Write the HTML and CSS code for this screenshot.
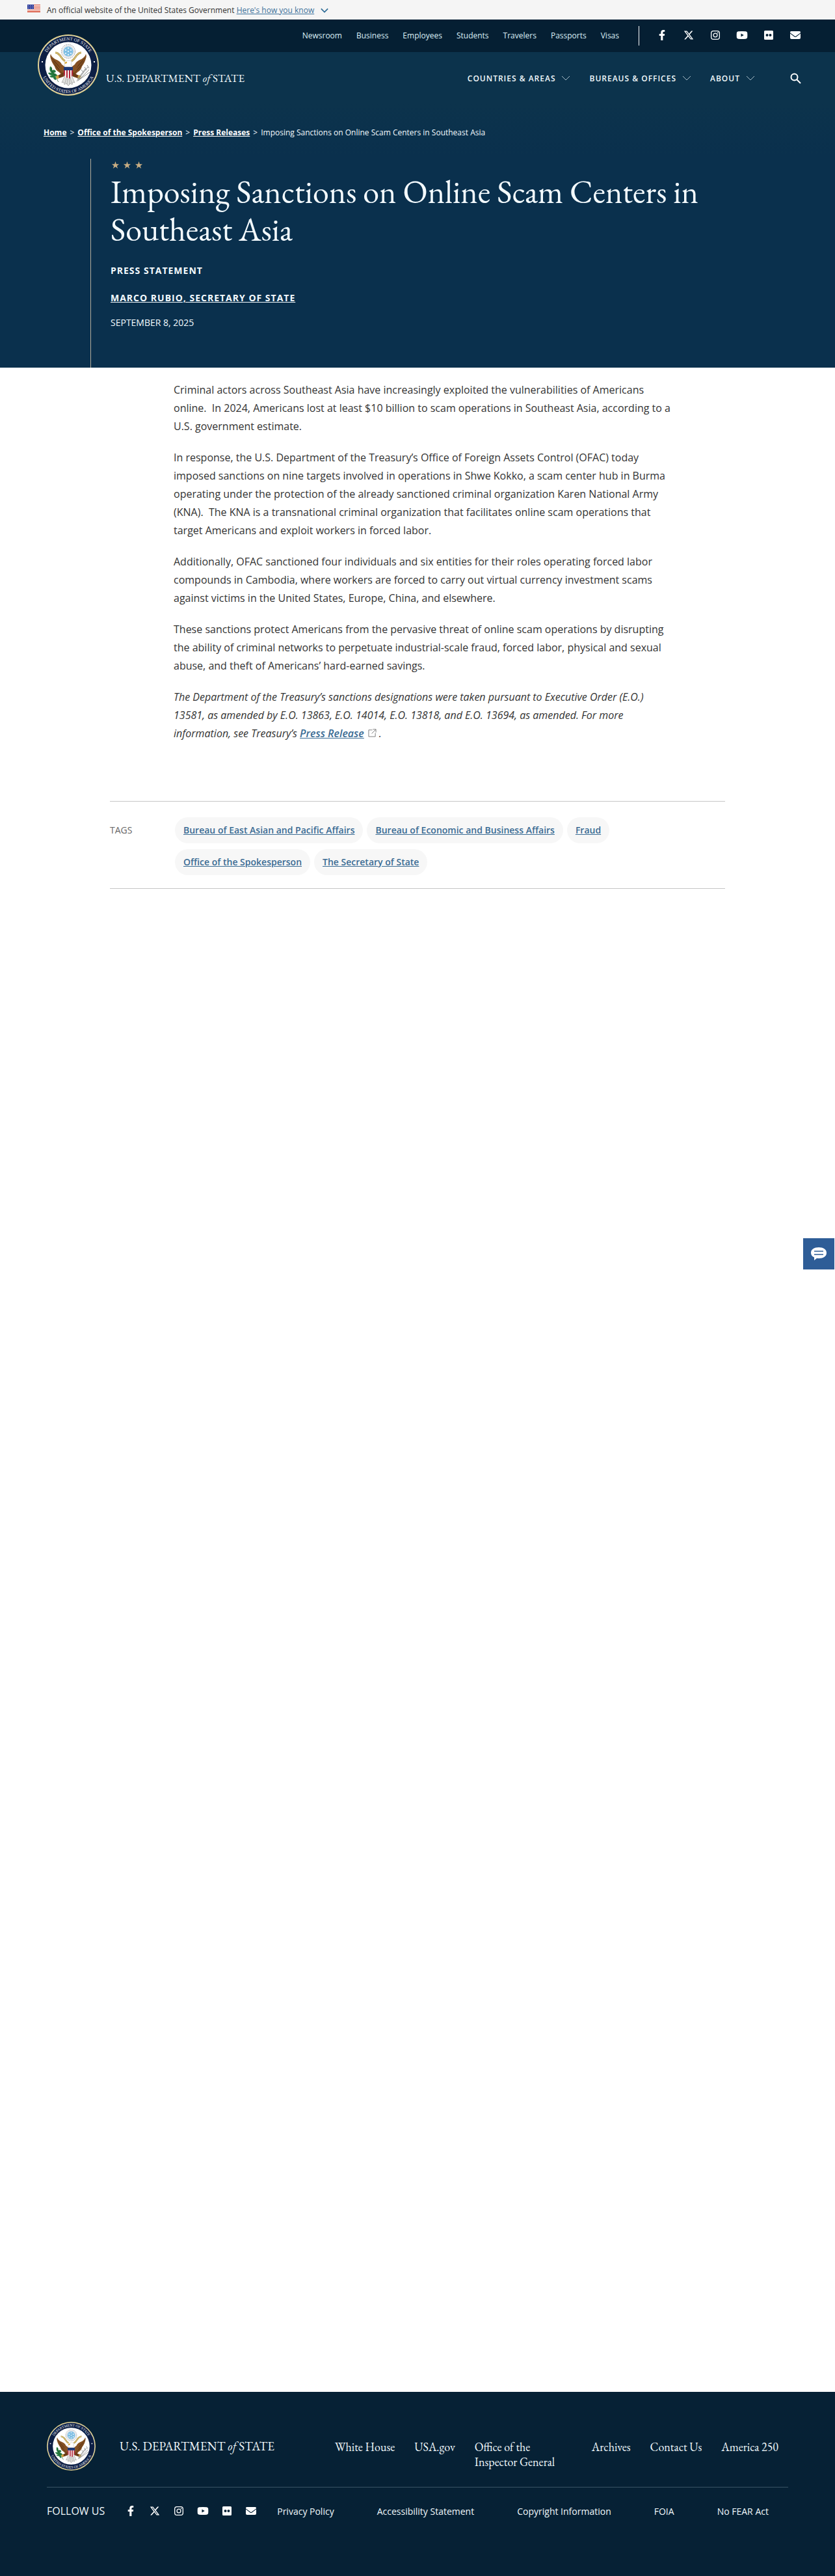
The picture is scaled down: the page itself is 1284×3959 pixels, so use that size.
FILE: index.html
```html
<!DOCTYPE html>
<html lang="en">
<head>
  <meta charset="UTF-8">
  <meta name="viewport" content="width=device-width, initial-scale=1">
  <title>Imposing Sanctions on Online Scam Centers in Southeast Asia</title>
  <link rel="stylesheet" href="styles.css">
</head>
<body>
  <!-- shared icons -->
  <svg class="sprite" aria-hidden="true">
    <symbol id="facebook" viewBox="0 0 320 512"><path d="M279 288l14-93h-89v-60c0-25 12-50 52-50h41V7s-37-7-72-7c-73 0-121 44-121 125v70H23v93h81v224h100V288z"/></symbol>
    <symbol id="x" viewBox="0 0 512 512"><path d="M389 48h71L306 224l181 240H345L234 319 107 464H36l165-188L27 48h145l101 133zm-25 374h39L151 88h-42z"/></symbol>
    <symbol id="instagram" viewBox="0 0 512 512"><path fill-rule="evenodd" d="M160 32h192a128 128 0 0 1 128 128v192a128 128 0 0 1-128 128H160A128 128 0 0 1 32 352V160A128 128 0 0 1 160 32zm4 41a90 90 0 0 0-90 90v186a90 90 0 0 0 90 90h184a90 90 0 0 0 90-90V163a90 90 0 0 0-90-90zm92 69a114 114 0 1 1 0 228 114 114 0 0 1 0-228zm0 40a74 74 0 1 0 0 148 74 74 0 0 0 0-148z"/><circle cx="375" cy="137" r="27"/></symbol>
    <symbol id="youtube" viewBox="0 0 576 512"><path fill-rule="evenodd" d="M100 72q188-16 376 0 66 5 74 70 10 114 0 228-8 65-74 70-188 16-376 0-66-5-74-70-10-114 0-228 8-65 74-70zm138 106v156l138-78z"/></symbol>
    <symbol id="flickr" viewBox="0 0 448 512"><path fill-rule="evenodd" d="M48 32h352q48 0 48 48v352q0 48-48 48H48q-48 0-48-48V80q0-48 48-48zm97 160a64 64 0 1 0 0 128 64 64 0 0 0 0-128zm158 0a64 64 0 1 0 0 128 64 64 0 0 0 0-128z"/></symbol>
    <symbol id="mail" viewBox="0 0 512 512"><path d="M48 64h416q48 0 48 48 0 24-20 38L275 314q-19 14-38 0L20 150Q0 136 0 112q0-48 48-48zM0 176l218 164q38 28 76 0l218-164v208q0 64-64 64H64q-64 0-64-64z"/></symbol>
    <symbol id="star" viewBox="0 0 24 24"><path d="M12 0l3 9h9l-7 6 3 9-8-6-8 6 3-9-7-6h9z"/></symbol>
    <symbol id="chevron" viewBox="0 0 14 8"><path d="M1 1l6 6 6-6" fill="none" stroke="currentColor"/></symbol>
  </svg>

  <div class="gov-banner">
    <svg class="flag" viewBox="0 0 20 12" aria-hidden="true">
      <path fill="#fff" d="M0 0h20v12H0z"/>
      <path fill="#db5f4a" d="M0 0h20v1H0zm0 2h20v1H0zm0 2h20v1H0zm0 2h20v1H0zm0 2h20v1H0zm0 2h20v1H0zm0 1h20v1H0z"/>
      <path fill="#2f3f9b" d="M0 0h10v7H0z"/>
      <path fill="#b9c0e4" d="M1 1h1v1H1zm3 0h1v1H4zm3 0h1v1H7zM2 3h1v1H2zm3 0h1v1H5zm3 0h1v1H8zM1 5h1v1H1zm3 0h1v1H4zm3 0h1v1H7z"/>
    </svg>
    <p>An official website of the United States Government <a href="#">Here's how you know</a></p>
    <svg class="banner-chevron" aria-hidden="true"><use href="#chevron"/></svg>
  </div>

  <header class="site-header">
    <div class="top-bar">
      <nav class="top-nav" aria-label="Audience">
        <a href="#">Newsroom</a>
        <a href="#">Business</a>
        <a href="#">Employees</a>
        <a href="#">Students</a>
        <a href="#">Travelers</a>
        <a href="#">Passports</a>
        <a href="#">Visas</a>
      </nav>
      <div class="social top-social">
        <a href="#" aria-label="Facebook"><svg><use href="#facebook"/></svg></a>
        <a href="#" aria-label="X"><svg><use href="#x"/></svg></a>
        <a href="#" aria-label="Instagram"><svg><use href="#instagram"/></svg></a>
        <a href="#" aria-label="YouTube"><svg><use href="#youtube"/></svg></a>
        <a href="#" aria-label="Flickr"><svg><use href="#flickr"/></svg></a>
        <a href="#" aria-label="Email"><svg><use href="#mail"/></svg></a>
      </div>
    </div>
    <div class="main-bar">
      <a class="brand" href="#">
        <svg class="seal" viewBox="0 0 94 94" aria-hidden="true">
          <defs>
            <path id="arc-top" d="M9 47a38 38 0 0 1 76 0"/>
            <path id="arc-bottom" d="M4 47a43 43 0 0 0 86 0"/>
          </defs>
          <g id="seal">
            <circle cx="47" cy="47" r="47" fill="#dccb86"/>
            <circle cx="47" cy="47" r="45.500" fill="#f7f2d8"/>
            <circle cx="47" cy="47" r="45" fill="#0d1f45"/>
            <circle cx="47" cy="47" r="35.500" fill="#fff"/>
            <g fill="#e8ebf0" font-family="Liberation Serif, serif" font-size="7" text-anchor="middle">
              <text><textPath href="#arc-top" startOffset="50%">DEPARTMENT OF STATE</textPath></text>
              <text><textPath href="#arc-bottom" startOffset="50%">UNITED STATES OF AMERICA</textPath></text>
            </g>
            <path d="M6 41h2v2H6zm80 0h2v2h-2z" fill="#fff"/>
            <!-- glory -->
            <circle cx="47" cy="26" r="10.500" fill="#fff" stroke="#8d9298" stroke-width="1" stroke-dasharray="2 1"/>
            <circle cx="47" cy="26" r="8.500" fill="none" stroke="#c9cdd2" stroke-width="1"/>
            <circle cx="47" cy="26" r="7.500" fill="#7fbfe4"/>
            <g fill="#fff"><circle cx="47" cy="21" r="1"/><circle cx="43" cy="24" r="1"/><circle cx="51" cy="24" r="1"/><circle cx="47" cy="26" r="1"/><circle cx="43" cy="29" r="1"/><circle cx="51" cy="29" r="1"/><circle cx="47" cy="31" r="1"/></g>
            <!-- tail -->
            <path d="M42 63l-5 11 3-1 1 4 3-2 3 4 3-4 3 2 1-4 3 1-5-11z" fill="#e4e4e2" stroke="#8c8c89" stroke-width=".6"/>
            <path d="M44 66l-2 9m4-9l-1 11m3-11l1 11m1-11l2 9" stroke="#8c8c89" stroke-width=".6"/>
            <!-- wings -->
            <path d="M20 30c1 4 4 6 7 8 5 2 8 4 10 8l5 4v14c-4-1-7-3-9-6-4-2-6-5-7-9-3-4-5-8-6-12-1-3-1-5 0-7z" fill="#855123"/>
            <path d="M74 30c-1 4-4 6-7 8-5 2-8 4-10 8l-5 4v14c4-1 7-3 9-6 4-2 6-5 7-9 3-4 5-8 6-12 1-3 1-5 0-7z" fill="#855123"/>
            <path d="M21 36l11 12m-9-7l10 13m-7-7l12 13M25 40l9 11m39-15L62 48m9-7L61 54m7-7L56 60m13-20l-9 11" stroke="#4f2d12" stroke-width=".7" fill="none"/>
            <!-- ribbon -->
            <path d="M27 28c4 0 5 2 7 4s3 6 8 9m25-13c-4 0-5 2-7 4s-3 6-8 9" fill="none" stroke="#b5994a" stroke-width="3"/>
            <path d="M27 28c4 0 5 2 7 4s3 6 8 9m25-13c-4 0-5 2-7 4s-3 6-8 9" fill="none" stroke="#f0dd97" stroke-width="1"/>
            <!-- head -->
            <path d="M41 49c0-6 2-9 7-9 4 0 5 3 3 5l2 5z" fill="#fff" stroke="#aaa" stroke-width=".5"/>
            <path d="M45 42l-4 1 1 2 3-1z" fill="#dda62d"/>
            <!-- legs -->
            <path d="M40 58l-7 4-4 2 1 4 9-3 4-2m11-5l7 4 4 2-1 4-9-3-4-2" fill="#6b3c19"/>
            <path d="M27 64l4-2 2 4-3 3zm40 0l-4-2-2 4 3 3z" fill="#d1a43e"/>
            <!-- shield -->
            <path d="M40 50h14v12q-2 4-7 6-5-2-7-6z" fill="#f5eeee"/>
            <path d="M40 55h2v9l-2-2zm4 0h2v12l-2-1zm4 0h2v12l-2 1zm4 0h2v7l-2 3z" fill="#b3263a"/>
            <path d="M40 50h14v5H40z" fill="#1c3775"/>
            <!-- olive branch -->
            <path d="M19 49q4 1 3 6 5-2 6 2-1 2-4 2 5 1 6 4-2 2-4 1 3 3 2 6-4-1-4-4-4 1-6-2l4-1q-5-1-6-4 2-1 5 0-4-4-2-10z" fill="#247a3e"/>
            <path d="M20 51q3 8 12 22" fill="none" stroke="#15502a" stroke-width=".7"/>
            <!-- arrows -->
            <path d="M60 72l17-22m-15 21l17-17m-16 16l17-12m-19 11l12-16m-6 1l3 4m2-8l3 5m1-8l3 5" fill="none" stroke="#8b8d8e" stroke-width="1"/>
          </g>
        </svg>
        <span>U.S. DEPARTMENT <i>of</i> STATE</span>
      </a>
      <nav class="main-nav" aria-label="Main">
        <button type="button">Countries &amp; Areas <svg><use href="#chevron"/></svg></button>
        <button type="button">Bureaus &amp; Offices <svg><use href="#chevron"/></svg></button>
        <button type="button">About <svg><use href="#chevron"/></svg></button>
      </nav>
      <button class="search" type="button" aria-label="Search">
        <svg viewBox="0 0 17 17"><circle cx="6.500" cy="6.500" r="5"/><path d="M10 10l6 6"/></svg>
      </button>
    </div>
  </header>

  <section class="hero">
    <nav class="breadcrumb" aria-label="Breadcrumb">
      <a href="#">Home</a><span>&gt;</span><a href="#">Office of the Spokesperson</a><span>&gt;</span><a href="#">Press Releases</a><span>&gt;</span>Imposing Sanctions on Online Scam Centers in Southeast Asia
    </nav>
    <div class="hero-inner">
      <div class="stars" aria-hidden="true">
        <svg><use href="#star"/></svg><svg><use href="#star"/></svg><svg><use href="#star"/></svg>
      </div>
      <h1>Imposing Sanctions on Online Scam Centers in Southeast Asia</h1>
      <p class="doc-type">Press Statement</p>
      <p class="author"><a href="#">Marco Rubio, Secretary of State</a></p>
      <p class="date">September 8, 2025</p>
    </div>
  </section>

  <main>
    <article class="entry">
      <p>Criminal actors across Southeast Asia have increasingly exploited the vulnerabilities of Americans online.&nbsp; In 2024, Americans lost at least $10 billion to scam operations in Southeast Asia, according to a U.S. government estimate.</p>
      <p>In response, the U.S. Department of the Treasury’s Office of Foreign Assets Control (OFAC) today imposed sanctions on nine targets involved in operations in Shwe Kokko, a scam center hub in Burma operating under the protection of the already sanctioned criminal organization Karen National Army (KNA).&nbsp; The KNA is a transnational criminal organization that facilitates online scam operations that target Americans and exploit workers in forced labor.</p>
      <p>Additionally, OFAC sanctioned four individuals and six entities for their roles operating forced labor compounds in Cambodia, where workers are forced to carry out virtual currency investment scams against victims in the United States, Europe, China, and elsewhere.</p>
      <p>These sanctions protect Americans from the pervasive threat of online scam operations by disrupting the ability of criminal networks to perpetuate industrial-scale fraud, forced labor, physical and sexual abuse, and theft of Americans’ hard-earned savings.</p>
      <p><em>The Department of the Treasury’s sanctions designations were taken pursuant to Executive Order (E.O.) 13581, as amended by E.O. 13863, E.O. 14014, E.O. 13818, and E.O. 13694, as amended. For more information, see Treasury’s <a href="#">Press Release</a><svg class="external" viewBox="0 0 14 14" aria-hidden="true"><path d="M7 2H1v11h11V7M8 1h5v5M13 1L6 8"/></svg>.</em></p>
    </article>

    <section class="tags">
      <h2>Tags</h2>
      <ul>
        <li><a href="#">Bureau of East Asian and Pacific Affairs</a></li>
        <li><a href="#">Bureau of Economic and Business Affairs</a></li>
        <li><a href="#">Fraud</a></li>
        <li><a href="#">Office of the Spokesperson</a></li>
        <li><a href="#">The Secretary of State</a></li>
      </ul>
    </section>
  </main>

  <button class="feedback" type="button" aria-label="Feedback">
    <svg viewBox="0 0 24 20"><path fill="#fff" d="M12 0c7 0 12 3 12 8.500S19 17 12 17l-3-.3-4 3.300v-4.700C2 14 0 12 0 8.500 0 3 5 0 12 0z"/><path stroke="#2e5d97" stroke-width="1.500" d="M5 6h14M5 11h14"/></svg>
  </button>

  <footer class="site-footer">
    <div class="footer-inner">
      <div class="footer-top">
        <a class="footer-brand" href="#">
          <svg class="seal" viewBox="0 0 94 94" aria-hidden="true"><use href="#seal"/></svg>
          <span>U.S. DEPARTMENT <i>of</i> STATE</span>
        </a>
        <nav class="footer-nav" aria-label="Footer">
          <a href="#">White House</a>
          <a href="#">USA.gov</a>
          <a class="wrap" href="#">Office of the Inspector General</a>
          <a href="#">Archives</a>
          <a href="#">Contact Us</a>
          <a href="#">America 250</a>
        </nav>
      </div>
      <div class="footer-bottom">
        <span class="follow">FOLLOW US</span>
        <div class="social footer-social">
          <a href="#" aria-label="Facebook"><svg><use href="#facebook"/></svg></a>
          <a href="#" aria-label="X"><svg><use href="#x"/></svg></a>
          <a href="#" aria-label="Instagram"><svg><use href="#instagram"/></svg></a>
          <a href="#" aria-label="YouTube"><svg><use href="#youtube"/></svg></a>
          <a href="#" aria-label="Flickr"><svg><use href="#flickr"/></svg></a>
          <a href="#" aria-label="Email"><svg><use href="#mail"/></svg></a>
        </div>
        <nav class="legal" aria-label="Legal">
          <a href="#">Privacy Policy</a>
          <a href="#">Accessibility Statement</a>
          <a href="#">Copyright Information</a>
          <a href="#">FOIA</a>
          <a href="#">No FEAR Act</a>
        </nav>
      </div>
    </div>
  </footer>
</body>
</html>
```
FILE: styles.css
```css
* {
  box-sizing: border-box;
}
body {
  margin: 0;
  min-height: 100vh;
  display: flex;
  flex-direction: column;
  font-family: "Open Sans", Arial, sans-serif;
  color: #333;
  background: #fff;
}
p, h1, h2, ul {
  margin: 0;
  padding: 0;
}
button {
  font: inherit;
  color: inherit;
  background: none;
  border: 0;
  padding: 0;
  cursor: pointer;
}
.sprite {
  position: absolute;
  width: 0;
  height: 0;
}

/* gov banner */
.gov-banner {
  display: flex;
  align-items: center;
  height: 30px;
  padding: 0 42px;
  background: #f5f5f5;
  font-size: 12px;
}
.gov-banner a {
  color: #3e729b;
}
.flag {
  width: 20px;
  height: 12px;
  margin: 0 10px 4px 0;
}
.banner-chevron {
  width: 12px;
  height: 8px;
  margin: 2px 0 0 10px;
  color: #2e6c96;
  stroke-width: 2;
}

/* header */
.top-bar {
  display: flex;
  justify-content: flex-end;
  align-items: center;
  height: 50px;
  padding: 0 52px;
  background: #051f33;
  color: #dcf0f7;
  font-size: 12px;
}
.top-bar a {
  padding-bottom: 2px;
  color: inherit;
  text-decoration: none;
}
.top-nav {
  display: flex;
  gap: 22px;
}
.social {
  display: flex;
  align-items: center;
  fill: #fff;
}
.social a {
  display: flex;
}
.social svg {
  width: 18px;
  height: 16px;
}
.top-social {
  gap: 23px;
  height: 30px;
  margin-left: 30px;
  padding-left: 26px;
  border-left: 1px solid #fff;
}
.main-bar {
  display: flex;
  align-items: center;
  height: 80px;
  padding: 0 52px 0 58px;
  background: #0c334c;
  color: #f2f9fb;
}
.brand {
  position: relative;
  padding-left: 105px;
  margin-right: auto;
  color: inherit;
  text-decoration: none;
  font-family: "EB Garamond", "Liberation Serif", serif;
  font-size: 17px;
}
.brand .seal {
  position: absolute;
  left: 0;
  bottom: -16px;
  width: 94px;
  height: 94px;
}
.main-nav {
  display: flex;
  gap: 29px;
}
.main-nav button {
  display: flex;
  align-items: center;
  gap: 9px;
  font-size: 12px;
  font-weight: 600;
  letter-spacing: 1px;
  text-transform: uppercase;
}
.main-nav svg {
  width: 14px;
  height: 8px;
  color: #a8bcc8;
}
.search {
  margin-left: 54px;
}
.search svg {
  display: block;
  width: 17px;
  height: 17px;
  fill: none;
  stroke: #fff;
  stroke-width: 2;
}

/* hero */
.hero {
  background: linear-gradient(#0c334c, #0a304d 80px);
  color: #f4fbff;
}
.breadcrumb {
  padding: 34px 67px 0;
  font-size: 12px;
  line-height: 20px;
}
.breadcrumb a {
  color: #fff;
  font-weight: 700;
}
.breadcrumb span {
  margin: 0 5px;
}
.hero-inner {
  max-width: 1006px;
  margin: 30px auto 0;
  padding: 4px 30px 59px;
  border-left: 1px solid #b3ad9b;
}
.stars {
  display: flex;
  gap: 7px;
  padding-left: 2px;
  fill: #c8ad83;
}
.stars svg {
  width: 11px;
  height: 11px;
}
h1 {
  margin-top: 7px;
  font-family: "EB Garamond", "Liberation Serif", serif;
  font-size: 50px;
  font-weight: 400;
  line-height: 58px;
}
.doc-type, .author {
  font-size: 14px;
  font-weight: 700;
  letter-spacing: 1px;
  line-height: 20px;
  text-transform: uppercase;
}
.doc-type {
  margin-top: 24px;
}
.author {
  margin-top: 22px;
}
.author a {
  color: inherit;
}
.date {
  margin-top: 18px;
  font-size: 14px;
  line-height: 20px;
  text-transform: uppercase;
}

/* article */
main {
  flex: 1;
}
.entry {
  max-width: 790px;
  margin: 0 auto;
  padding: 20px 0 0 20px;
  font-size: 16px;
  line-height: 28px;
}
.entry p {
  margin-bottom: 20px;
}
.entry a {
  color: #3b6c94;
  font-weight: 600;
}
.external {
  width: 13px;
  height: 13px;
  margin: 0 4px 0 6px;
  fill: none;
  stroke: #777;
}
.tags {
  display: flex;
  max-width: 946px;
  margin: 90px auto 0;
  padding: 24px 0 20px;
  border-top: 1px solid #c6c6c6;
  border-bottom: 1px solid #c6c6c6;
}
.tags h2 {
  width: 100px;
  flex: none;
  font-size: 14px;
  font-weight: 400;
  line-height: 40px;
  color: #666;
  text-transform: uppercase;
}
.tags ul {
  display: flex;
  flex-wrap: wrap;
  gap: 9px 6px;
  list-style: none;
}
.tags a {
  display: block;
  padding: 0 13px;
  border-radius: 20px;
  background: #f7f7f7;
  color: #3b6c94;
  font-size: 14px;
  font-weight: 600;
  line-height: 40px;
}
.feedback {
  position: fixed;
  right: 1px;
  top: calc(50% - 77px);
  display: flex;
  align-items: center;
  justify-content: center;
  width: 48px;
  height: 48px;
  background: #2e5d97;
}
.feedback svg {
  width: 24px;
  height: 20px;
}

/* footer */
.site-footer {
  padding: 46px 30px 89px;
  background: #062135;
}
.site-footer a {
  color: #f0f8fb;
  text-decoration: none;
}
.footer-inner {
  max-width: 1140px;
  margin: 0 auto;
}
.footer-top {
  display: flex;
  align-items: flex-start;
  justify-content: space-between;
  padding: 0 15px 25px 0;
  border-bottom: 1px solid #3a5264;
  font-family: "EB Garamond", "Liberation Serif", serif;
  font-size: 18px;
  line-height: 23px;
}
.footer-brand {
  display: flex;
  align-items: center;
  gap: 37px;
  font-size: 19px;
}
.footer-brand .seal {
  width: 75px;
  height: 75px;
}
.footer-nav {
  display: flex;
  gap: 30px;
  padding-top: 27px;
}
.footer-nav .wrap {
  width: 150px;
}
.footer-bottom {
  display: flex;
  align-items: center;
  padding-top: 25px;
  color: #f0f8fb;
}
.follow {
  font-size: 16px;
}
.footer-social {
  gap: 19px;
  margin-left: 31px;
}
.legal {
  display: flex;
  flex: 1;
  justify-content: space-between;
  margin: 0 30px 0 31px;
  font-size: 14px;
}
```
